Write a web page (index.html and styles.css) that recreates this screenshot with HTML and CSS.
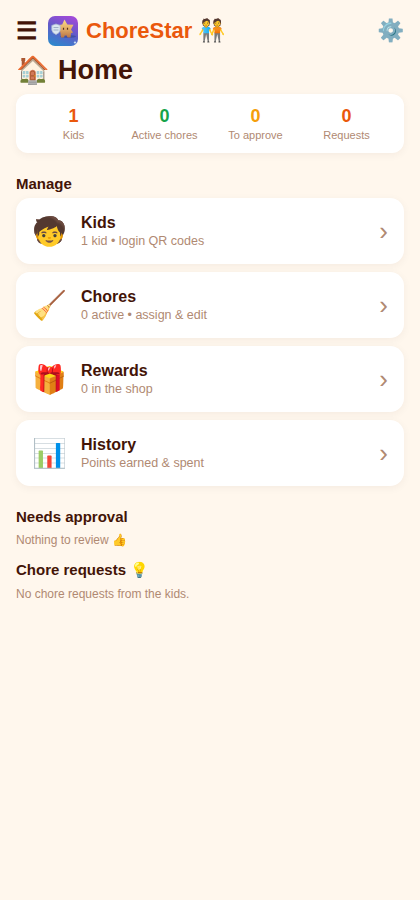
FILE: index.html
```html
<!DOCTYPE html>
<html lang="en">
<head>
<meta charset="utf-8">
<title>ChoreStar</title>
<link rel="stylesheet" href="styles.css">
</head>
<body>
<header class="topbar">
  <button class="menu" aria-label="Menu">☰</button>
  <svg class="logo" viewBox="0 0 30 30" aria-hidden="true">
    <defs>
      <linearGradient id="sky" x1="0.7" y1="0" x2="0.3" y2="1"><stop offset="0" stop-color="#a04ad8"/><stop offset="0.5" stop-color="#5f5bc8"/><stop offset="1" stop-color="#2f86cc"/></linearGradient>
      <linearGradient id="gold" x1="0" y1="0" x2="0" y2="1"><stop offset="0" stop-color="#fbdc86"/><stop offset="0.5" stop-color="#e4ae68"/><stop offset="1" stop-color="#b87445"/></linearGradient>
    </defs>
    <rect width="30" height="30" rx="7" fill="url(#sky)"/>
    <ellipse cx="20" cy="20.500" rx="8" ry="1.500" fill="#31458f" opacity=".6"/>
    <path d="M16.500 3.500l2.800 5 6.200.2-2.500 4.800 2 3-2 .7-.5 4.300h-3l-.8-2h-2l-.7 2h-3l-.5-4.500-1-3.500-2.500-4.300 5.200-.7z" fill="url(#gold)"/>
    <path d="M15.500 11.800v2M19.500 11.800v2" stroke="#54301f" stroke-width="1.200"/>
    <path d="M3.800 9.500l4.200-1.500 4.200 1.500v4.500q-.5 3-4.200 4.500-3.700-1.500-4.200-4.500z" fill="#dbe6f0" stroke="#a9b8d2" stroke-width=".8"/>
    <path d="M5.500 11.500h5M5.500 14h5" stroke="#91a3bd" stroke-width=".8"/>
    <path d="M27 24.500l.5 1.500 1 .5-1 .5-.5 1.500-.5-1.500-1-.5 1-.5z" fill="#d8eaf7"/>
  </svg>
  <span class="brand">ChoreStar 🧑‍🤝‍🧑</span>
  <button class="gear" aria-label="Settings">⚙️</button>
</header>
<main>
  <h1>🏠 Home</h1>
  <section class="stats">
    <div class="stat"><b class="orange">1</b><span>Kids</span></div>
    <div class="stat"><b class="green">0</b><span>Active chores</span></div>
    <div class="stat"><b class="amber">0</b><span>To approve</span></div>
    <div class="stat"><b class="orange">0</b><span>Requests</span></div>
  </section>
  <h2 class="manage">Manage</h2>
  <nav class="tiles">
    <a class="tile"><span class="emoji">🧒</span><span class="text"><b>Kids</b><small>1 kid • login QR codes</small></span><span class="chev">›</span></a>
    <a class="tile"><span class="emoji">🧹</span><span class="text"><b>Chores</b><small>0 active • assign &amp; edit</small></span><span class="chev">›</span></a>
    <a class="tile"><span class="emoji">🎁</span><span class="text"><b>Rewards</b><small>0 in the shop</small></span><span class="chev">›</span></a>
    <a class="tile"><span class="emoji">📊</span><span class="text"><b>History</b><small>Points earned &amp; spent</small></span><span class="chev">›</span></a>
  </nav>
  <h2 class="approval">Needs approval</h2>
  <p>Nothing to review 👍</p>
  <h2 class="requests">Chore requests 💡</h2>
  <p>No chore requests from the kids.</p>
</main>
</body>
</html>
```
FILE: styles.css
```css
* { box-sizing: border-box; }
body { margin: 0; padding: 14px 16px; min-height: 900px; background: #fff7ed; color: #431407; font-family: "Liberation Sans", sans-serif; }
button { border: 0; padding: 0; background: none; color: inherit; font-family: inherit; }
.topbar { display: flex; align-items: center; height: 34px; }
.menu { width: 22px; margin-right: 10px; font-size: 24px; font-weight: 700; line-height: 34px; text-align: left; }
.logo { width: 30px; height: 30px; margin-right: 8px; }
.brand { font-size: 22px; font-weight: 700; color: #ea580c; white-space: nowrap; }
.gear { margin-left: auto; font-size: 22px; line-height: 34px; }
h1 { margin: 4px 0 6px; font-size: 27px; line-height: 36px; word-spacing: 0.6px; }
.stats { display: grid; grid-template-columns: repeat(4, 1fr); padding: 12px; height: 59px; background: #fff; border-radius: 12px; box-shadow: 0 2px 8px #4314070d; }
.stat { text-align: center; color: #b08972; font-size: 11px; }
.stat b { display: block; font-size: 18px; line-height: 20px; }
.stat span { display: block; line-height: 13px; margin-top: 3px; }
.stat b.orange { color: #ea580c; }
.stat b.green { color: #16a34a; }
.stat b.amber { color: #f59e0b; }
h2 { margin: 0; font-size: 15px; line-height: 18px; }
.manage { margin: 22px 0 5px; }
.tiles { display: grid; gap: 8px; }
.tile { display: flex; align-items: center; height: 66px; padding: 0 16px; background: #fff; border-radius: 14px; box-shadow: 0 2px 8px #4314070d; }
.emoji { width: 35px; margin-right: 14px; font-size: 28px; text-align: center; }
.text { flex: 1; }
.text b { display: block; font-size: 16px; line-height: 18px; }
.text small { display: block; font-size: 12.5px; line-height: 15px; margin-top: 2px; color: #b08972; }
.chev { font-size: 26px; color: #b08972; }
.approval { margin: 22px 0 7px; }
.requests { margin: 13px 0 8px; }
p { margin: 0; font-size: 12px; line-height: 15px; color: #b08972; }
```
